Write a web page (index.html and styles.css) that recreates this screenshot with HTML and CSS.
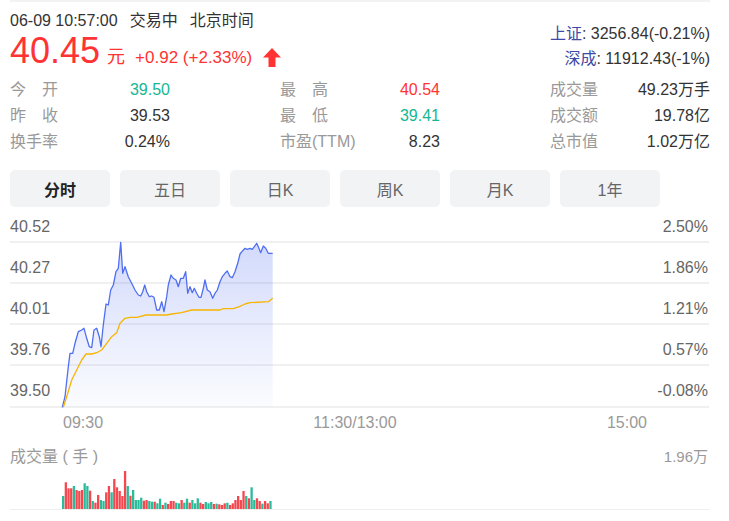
FILE: index.html
```html
<!DOCTYPE html>
<html lang="zh-CN">
<head>
    <meta charset="UTF-8">
    <meta name="viewport" content="width=device-width, initial-scale=1.0">
    <title>分时行情</title>
    <link rel="stylesheet" href="styles.css">
</head>
<body>
    <div class="quote">
        <header class="quote-head">
            <div class="head-left">
                <div class="time-line">
                    <span>06-09 10:57:00</span>
                    <span>交易中</span>
                    <span>北京时间</span>
                </div>
                <div class="price-line">
                    <span class="price">40.45</span>
                    <span class="unit">元</span>
                    <span class="change">+0.92 (+2.33%)</span>
                    <svg class="arrow" width="18" height="19" viewBox="0 0 18 19">
                        <path d="M9 0 L18 9.5 L12.5 9.5 L12.5 19 L5.5 19 L5.5 9.5 L0 9.5 Z" fill="#f33"/>
                    </svg>
                </div>
            </div>
            <div class="head-right">
                <div class="index"><span class="index-name">上证</span>: 3256.84(-0.21%)</div>
                <div class="index"><span class="index-name">深成</span>: 11912.43(-1%)</div>
            </div>
        </header>

        <section class="stats">
            <div class="stat-col">
                <div class="stat"><span class="label wide">今开</span><span class="val green">39.50</span></div>
                <div class="stat"><span class="label wide">昨收</span><span class="val">39.53</span></div>
                <div class="stat"><span class="label">换手率</span><span class="val">0.24%</span></div>
            </div>
            <div class="stat-col">
                <div class="stat"><span class="label wide">最高</span><span class="val red">40.54</span></div>
                <div class="stat"><span class="label wide">最低</span><span class="val green">39.41</span></div>
                <div class="stat"><span class="label">市盈(TTM)</span><span class="val">8.23</span></div>
            </div>
            <div class="stat-col">
                <div class="stat"><span class="label">成交量</span><span class="val">49.23万手</span></div>
                <div class="stat"><span class="label">成交额</span><span class="val">19.78亿</span></div>
                <div class="stat"><span class="label">总市值</span><span class="val">1.02万亿</span></div>
            </div>
        </section>

        <nav class="tabs">
            <div class="tab active">分时</div>
            <div class="tab">五日</div>
            <div class="tab">日K</div>
            <div class="tab">周K</div>
            <div class="tab">月K</div>
            <div class="tab">1年</div>
        </nav>

        <svg class="price-chart" width="700" height="222" viewBox="10 210 700 222">
            <defs>
                <linearGradient id="areaFill" x1="0" y1="0" x2="0" y2="1">
                    <stop offset="0" stop-color="#5470f0" stop-opacity="0.26"/>
                    <stop offset="1" stop-color="#5470f0" stop-opacity="0.02"/>
                </linearGradient>
            </defs>
            <g class="grid">
                <line x1="10" y1="242" x2="709" y2="242"/>
                <line x1="10" y1="283" x2="709" y2="283"/>
                <line x1="10" y1="324" x2="709" y2="324"/>
                <line x1="10" y1="365" x2="709" y2="365"/>
                <line x1="10" y1="407" x2="709" y2="407"/>
            </g>
            <g class="axis-left">
                <text x="10" y="232">40.52</text>
                <text x="10" y="273">40.27</text>
                <text x="10" y="314">40.01</text>
                <text x="10" y="355">39.76</text>
                <text x="10" y="396">39.50</text>
            </g>
            <g class="axis-right">
                <text x="708" y="232">2.50%</text>
                <text x="708" y="273">1.86%</text>
                <text x="708" y="314">1.21%</text>
                <text x="708" y="355">0.57%</text>
                <text x="708" y="396">-0.08%</text>
            </g>
            <g class="axis-time">
                <text x="63" y="428">09:30</text>
                <text x="355" y="428" text-anchor="middle">11:30/13:00</text>
                <text x="647" y="428" text-anchor="end">15:00</text>
            </g>
            <polygon id="area" class="area" points=""/>
            <polyline id="priceLine" class="price-line-path" points=""/>
            <polyline class="avg-line" points="63.3,407.3 66.7,396.7 71.7,380 76.7,370 81.7,360 86,354 91.7,354 96.7,352.7 101.7,350 106.7,343.3 111.7,336.7 116.7,332.7 120,323.3 125,318.3 130,317.3 136.7,317.3 146,315 166.7,315 171.7,314 181.7,312.7 191.7,310 220,310 223.3,308.7 233.3,308.7 239.3,306.7 245,304 250,302.7 268.3,301.7 272.7,298.3"/>
        </svg>

        <section class="volume">
            <div class="vol-head">
                <span class="vol-title">成交量 ( 手 )</span>
                <span>1.96万</span>
            </div>
            <svg id="volChart" class="vol-chart" width="700" height="45" viewBox="10 467 700 45">
                <line class="vol-base" x1="10" y1="509.5" x2="709" y2="509.5"/>
            </svg>
        </section>
    </div>

    <script>
        const price = [
            [62.3,407.3],[65,396.7],[68.3,366.7],[70,353.3],[72.7,353.3],[75,343.3],[78.3,331.7],[81.7,330],
            [84,328.3],[86.7,338.3],[89.3,346.7],[91.7,347.7],[94,330],[96.7,328.3],[99.3,336.7],[101,346.7],
            [103.3,325],[106,304],[108.3,305],[110.7,290],[113.3,285],[116,271.7],[118.3,268.3],[120.7,242.3],
            [122.7,273.3],[125,266.7],[128.3,276.7],[131.7,283.3],[135,290],[138.3,295],[140.7,296],[142.7,291.7],
            [144.7,285],[146.7,291.7],[149.3,296.7],[151.7,296],[154,297.3],[156.7,310],[159.3,310],[161.7,301.7],
            [164,311.7],[166.7,296.7],[168.3,285],[171,275],[173.3,278.3],[176,280],[178.3,286.7],[180.7,278.3],
            [183.3,278.3],[185.7,271.7],[187.7,293.3],[190,286.7],[192.3,292.7],[194.3,288.3],[196.7,293.3],[199,297.3],
            [201,297.3],[203.3,288.3],[205,280],[207.3,290],[210,291.7],[212.7,298.3],[215,293.3],[217.3,290],
            [220,281.7],[222.3,276.7],[225,273.3],[227.3,271],[230,276.7],[232.3,277.7],[235,271.7],[237.7,263.3],
            [240,254],[242.7,250.7],[245,248.3],[247.3,249.3],[250,248.3],[252.3,249.3],[254.3,246.7],[256.7,243.3],
            [258.3,246.7],[260.7,252.7],[263.3,246],[265.7,248.3],[268.3,253.3],[272.7,253.3]
        ]
        const line = price.map(p => p.join(",")).join(" ")
        document.querySelector("#priceLine").setAttribute("points", line)
        document.querySelector("#area").setAttribute("points", line + " 272.7,407 62.3,407")

        // volume bars: height in px, 1 = up (red), 0 = down (green)
        const vols = [
            [13,0],[26.7,1],[20.7,1],[20.7,1],[23,0],[19,1],[18,1],[19,1],[25.7,0],[23,0],[18.3,1],[8,0],[6.3,1],
            [14,1],[9,0],[8,0],[16.7,1],[23,1],[16.7,0],[30,1],[21.7,1],[18,1],[13,1],[38,1],[23,0],[13.3,1],
            [19,0],[9,0],[9,0],[11.3,0],[8.3,1],[9,1],[8,0],[7.3,0],[7.3,1],[5.7,0],[10.3,0],[4,1],[6.3,0],
            [5,1],[8,1],[8,1],[6.3,0],[5.7,0],[9,1],[6.3,0],[10.3,0],[6.3,1],[9,0],[5.7,0],[10.7,0],[6.3,1],
            [5,1],[7,0],[5.7,0],[7,0],[5,1],[5.3,0],[4.7,1],[4,1],[5.7,1],[6.3,0],[4,1],[5.7,1],[9,1],[13,1],
            [9,1],[18,1],[13,0],[10.7,1],[21.7,0],[9,0],[10.7,1],[8,1],[5.3,0],[8,1],[5.7,1],[8,0]
        ]
        const svgNS = "http://www.w3.org/2000/svg"
        const chart = document.querySelector("#volChart")
        const step = 210 / vols.length
        for (const [i, v] of vols.entries()) {
            const r = document.createElementNS(svgNS, "rect")
            r.setAttribute("x", 62 + i * step)
            r.setAttribute("y", 509 - v[0])
            r.setAttribute("width", step - 0.4)
            r.setAttribute("height", v[0])
            r.setAttribute("class", v[1] ? "bar up" : "bar down")
            chart.appendChild(r)
        }
    </script>
</body>
</html>
```

FILE: styles.css
```css
body {
    margin: 0;
    background-color: #fff;
}
* {
    font-family: "Liberation Sans", "Noto Sans CJK SC", sans-serif;
}
.quote {
    width: 700px;
    margin-left: 10px;
    padding-top: 8px;
    border-top: 2px solid #f3f3f3;
}

/* header */
.quote-head {
    display: flex;
    justify-content: space-between;
}
.time-line {
    display: flex;
    gap: 12px;
    font-size: 16px;
    line-height: 22px;
    color: #333;
}
.price-line {
    display: flex;
    align-items: baseline;
    height: 38px;
    line-height: 38px;
    color: #f33;
}
.price {
    font-size: 36px;
}
.unit {
    font-size: 18px;
    margin-left: 7px;
}
.change {
    font-size: 17px;
    margin-left: 10px;
}
.arrow {
    align-self: flex-end;
    margin-left: 11px;
    margin-bottom: 3px;
}
.head-right {
    padding-top: 12px;
    text-align: right;
}
.index {
    font-size: 16px;
    line-height: 24px;
    color: #333;
}
.index + .index {
    padding-top: 1px;
    line-height: 23px;
}
.index-name {
    color: #3d4aa6;
}

/* stats */
.stats {
    display: flex;
    gap: 110px;
    margin-top: 7px;
}
.stat-col {
    width: 160px;
}
.stat {
    display: flex;
    justify-content: space-between;
    height: 26px;
    line-height: 26px;
    font-size: 16px;
}
.label {
    color: #999;
}
.label.wide {
    letter-spacing: 16px;
}
.val {
    color: #333;
}
.val.green {
    color: #14b794;
}
.val.red {
    color: #f33;
}

/* tabs */
.tabs {
    display: flex;
    gap: 10px;
    margin-top: 15px;
}
.tab {
    width: 100px;
    height: 37px;
    display: flex;
    align-items: center;
    justify-content: center;
    background-color: #f2f3f5;
    border-radius: 5px;
    font-size: 16px;
    color: #666;
}
.tab.active {
    font-weight: bold;
    color: #222;
}

/* chart */
.price-chart {
    display: block;
    margin-top: 3px;
}
.grid line {
    stroke: #f0f0f0;
    stroke-width: 2;
}
.axis-left text,
.axis-right text {
    font-size: 16px;
    fill: #666;
}
.axis-right text {
    text-anchor: end;
}
.axis-time text {
    font-size: 16px;
    fill: #999;
}
.area {
    fill: url(#areaFill);
}
.price-line-path {
    fill: none;
    stroke: #4f6ef0;
    stroke-width: 1.3;
    stroke-linejoin: round;
}
.avg-line {
    fill: none;
    stroke: #f7b500;
    stroke-width: 1.3;
    stroke-linejoin: round;
}

/* volume */
.vol-head {
    display: flex;
    justify-content: space-between;
    align-items: baseline;
    margin-top: 15px;
    padding-right: 2px;
    font-size: 15px;
    line-height: 20px;
    color: #999;
}
.vol-title {
    font-size: 16px;
}
.vol-chart {
    display: block;
}
.vol-base {
    stroke: #eee;
    stroke-width: 1;
}
.bar.up {
    fill: #f5333c;
    fill-opacity: 0.9;
}
.bar.down {
    fill: #13b48f;
    fill-opacity: 0.9;
}
```
